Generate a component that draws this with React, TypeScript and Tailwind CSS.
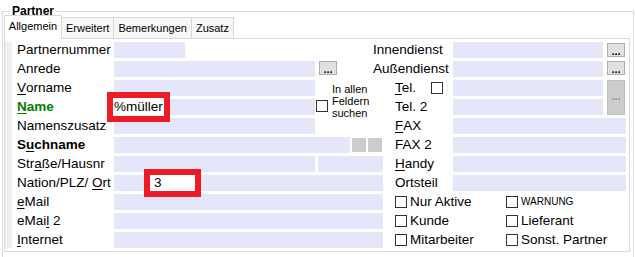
import React from 'react';

// Lavender input field used throughout the form
const Field: React.FC<{ className?: string; children?: React.ReactNode }> = ({ className = '', children }) => (
    <div className={`h-4 bg-[#e6e6fa] ${className}`}>{children}</div>
);

const Label: React.FC<{ className?: string; children: React.ReactNode }> = ({ className = '', children }) => (
    <div className={`flex items-center whitespace-nowrap text-[13.5px] leading-none ${className}`}>{children}</div>
);

const DotsButton: React.FC<{ className?: string }> = ({ className = '' }) => (
    <div
        className={`flex h-[14px] w-[18px] items-end justify-center border border-[#adadad] bg-[#e1e1e1] pb-[2px] text-[11px] font-bold leading-[6px] text-black ${className}`}
    >
        ...
    </div>
);

const Box: React.FC<{ className?: string }> = ({ className = '' }) => (
    <div className={`h-[12px] w-[12px] shrink-0 border border-[#333333] bg-white ${className}`} />
);

const Check: React.FC<{ label: string; small?: boolean; className?: string }> = ({ label, small, className = '' }) => (
    <div className={`flex items-center gap-[3px] ${className}`}>
        <Box />
        <span className={small ? 'text-[10px] leading-none' : 'text-[13.5px] leading-none'}>{label}</span>
    </div>
);

const U: React.FC<{ children: React.ReactNode }> = ({ children }) => (
    <span className="underline underline-offset-2">{children}</span>
);

const tabs = ['Allgemein', 'Erweitert', 'Bemerkungen', 'Zusatz'];

export default function App() {
    return (
        <div className="h-[257px] w-[635px] overflow-hidden bg-white font-['Liberation_Sans',Arial,sans-serif] text-black">
            <fieldset className="ml-[2px] mr-[1px] mt-[5px] border border-[#dcdcdc] pb-[6px] pl-[1px] pr-[3px]">
                <legend className="ml-[6px] px-[2px] text-[12px] font-bold leading-[12px]">Partner</legend>

                {/* Tabs */}
                <div className="flex h-[21px] items-end text-[11px]">
                    {tabs.map((t, i) =>
                        i === 0 ? (
                            <div
                                key={t}
                                className="relative z-10 -mb-px flex h-[24px] w-[58px] items-center justify-center border border-b-0 border-[#d9d9d9] bg-white pb-[2px]"
                            >
                                {t}
                            </div>
                        ) : (
                            <div
                                key={t}
                                className="flex h-[21px] items-center border border-l-0 border-b-0 border-[#d9d9d9] bg-[#f7f7f7] px-[4px]"
                            >
                                {t}
                            </div>
                        )
                    )}
                </div>

                {/* Tab panel */}
                <div className="flex border border-[#d9d9d9] pb-[3px] pr-[2px] pt-[3px]">
                    <div className="w-[7px] shrink-0 bg-[#f0f0f0]" />
                    <div className="grid grid-cols-[102px_201px_58px_22px_58px_150px_23px] grid-rows-[repeat(11,16px)] gap-y-[3px]">
                        {/* Row 1 */}
                        <Label className="col-start-1 row-start-1 pl-[5px]">Partnernummer</Label>
                        <Field className="col-start-2 row-start-1 w-[71px]" />
                        <Label className="col-start-4 col-span-2 row-start-1">Innendienst</Label>
                        <Field className="col-start-6 row-start-1" />
                        <DotsButton className="col-start-7 row-start-1 ml-[4px] self-center" />

                        {/* Row 2 */}
                        <Label className="col-start-1 row-start-2 pl-[5px]">Anrede</Label>
                        <Field className="col-start-2 row-start-2" />
                        <DotsButton className="col-start-3 row-start-2 ml-[4px]" />
                        <Label className="col-start-4 col-span-2 row-start-2">Außendienst</Label>
                        <Field className="col-start-6 row-start-2" />
                        <DotsButton className="col-start-7 row-start-2 ml-[4px]" />

                        {/* Row 3 */}
                        <Label className="col-start-1 row-start-3 pl-[5px]">
                            <U>V</U>orname
                        </Label>
                        <Field className="col-start-2 row-start-3" />
                        <div className="col-start-3 col-span-2 row-start-3 row-span-3 flex items-start gap-[4px] pl-[1px] pt-[3px]">
                            <Box className="mt-[17px]" />
                            <div className="text-[11px] leading-[12px]">
                                In allen
                                <br />
                                Feldern
                                <br />
                                suchen
                            </div>
                        </div>
                        <Label className="col-start-5 row-start-3">
                            <span className="w-[36px]">
                                <U>T</U>el.
                            </span>
                            <Box />
                        </Label>
                        <Field className="col-start-6 row-start-3" />
                        <div className="col-start-7 row-start-3 row-span-2 ml-[4px] flex w-[18px] items-center justify-center border border-[#bfbfbf] bg-[#cccccc] pb-[3px] text-[11px] font-bold leading-none text-[#8c8c8c]">
                            ...
                        </div>

                        {/* Row 4 */}
                        <Label className="col-start-1 row-start-4 pl-[5px] font-bold text-[#008000]">
                            <U>N</U>ame
                        </Label>
                        <Field className="relative col-start-2 row-start-4">
                            <div className="absolute -left-[7px] -top-[7px] flex h-[30px] w-[63px] items-center border-[6px] border-[#ed1c24] bg-white pl-[1px] text-[13.5px] leading-none">
                                %müller
                            </div>
                        </Field>
                        <Label className="col-start-5 row-start-4">Tel. 2</Label>
                        <Field className="col-start-6 row-start-4" />

                        {/* Row 5 */}
                        <Label className="col-start-1 row-start-5 pl-[5px]">Namenszusatz</Label>
                        <Field className="col-start-2 row-start-5" />
                        <Label className="col-start-5 row-start-5">
                            <U>F</U>AX
                        </Label>
                        <Field className="col-start-6 col-span-2 row-start-5" />

                        {/* Row 6 */}
                        <Label className="col-start-1 row-start-6 pl-[5px] font-bold">
                            S<U>u</U>chname
                        </Label>
                        <div className="col-start-2 col-span-3 row-start-6 flex items-center gap-[2px]">
                            <Field className="w-[236px]" />
                            <div className="h-[14px] w-[14px] bg-[#cccccc]" />
                            <div className="h-[14px] w-[14px] bg-[#cccccc]" />
                        </div>
                        <Label className="col-start-5 row-start-6">FAX 2</Label>
                        <Field className="col-start-6 col-span-2 row-start-6" />

                        {/* Row 7 */}
                        <Label className="col-start-1 row-start-7 pl-[5px]">
                            Str<U>a</U>ße/Hausnr
                        </Label>
                        <div className="col-start-2 col-span-3 row-start-7 flex gap-[3px]">
                            <Field className="w-[201px]" />
                            <Field className="w-[65px]" />
                        </div>
                        <Label className="col-start-5 row-start-7">
                            <U>H</U>andy
                        </Label>
                        <Field className="col-start-6 col-span-2 row-start-7" />

                        {/* Row 8 */}
                        <Label className="col-start-1 row-start-8 pl-[5px]">
                            Nation/PLZ/&nbsp;<U>O</U>rt
                        </Label>
                        <Field className="relative col-start-2 col-span-3 row-start-8 w-[269px]">
                            <div className="absolute left-[30px] -top-[6px] flex h-[28px] w-[57px] items-center border-[6px] border-[#ed1c24] bg-white pl-[4px] text-[13.5px] leading-none">
                                3
                            </div>
                        </Field>
                        <Label className="col-start-5 row-start-8">Ortsteil</Label>
                        <Field className="col-start-6 col-span-2 row-start-8" />

                        {/* Row 9 */}
                        <Label className="col-start-1 row-start-9 pl-[5px]">
                            <U>e</U>Mail
                        </Label>
                        <Field className="col-start-2 col-span-3 row-start-9 w-[269px]" />
                        <div className="col-start-5 col-span-3 row-start-9 flex">
                            <Check label="Nur Aktive" className="w-[111px]" />
                            <Check label="WARNUNG" small />
                        </div>

                        {/* Row 10 */}
                        <Label className="col-start-1 row-start-10 pl-[5px]">
                            eMai<U>l</U>&nbsp;2
                        </Label>
                        <Field className="col-start-2 col-span-3 row-start-10 w-[269px]" />
                        <div className="col-start-5 col-span-3 row-start-10 flex">
                            <Check label="Kunde" className="w-[111px]" />
                            <Check label="Lieferant" />
                        </div>

                        {/* Row 11 */}
                        <Label className="col-start-1 row-start-11 pl-[5px]">
                            <U>I</U>nternet
                        </Label>
                        <Field className="col-start-2 col-span-3 row-start-11 w-[269px]" />
                        <div className="col-start-5 col-span-3 row-start-11 flex">
                            <Check label="Mitarbeiter" className="w-[111px]" />
                            <Check label="Sonst. Partner" />
                        </div>
                    </div>
                </div>
            </fieldset>
        </div>
    );
}
